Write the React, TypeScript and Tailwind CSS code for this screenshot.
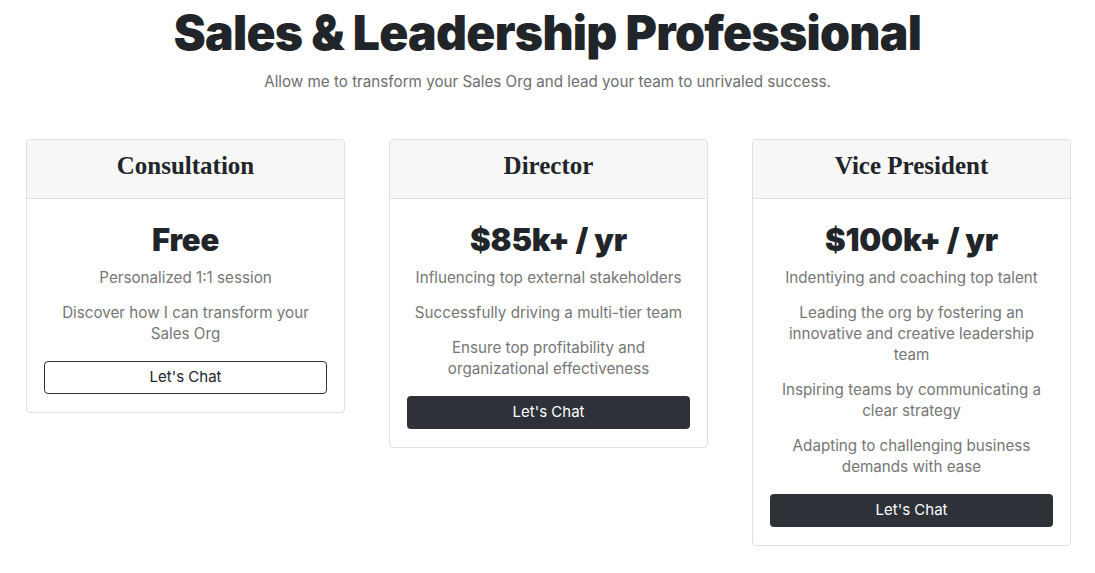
import React from 'react';

type Plan = {
  name: string;
  price: string;
  lines: React.ReactNode[];
  outline?: boolean;
};

const plans: Plan[] = [
  {
    name: 'Consultation',
    price: 'Free',
    lines: ['Personalized 1:1 session', 'Discover how I can transform your Sales Org'],
    outline: true,
  },
  {
    name: 'Director',
    price: '$85k+ / yr',
    lines: [
      'Influencing top external stakeholders',
      'Successfully driving a multi-tier team',
      'Ensure top profitability and organizational effectiveness',
    ],
  },
  {
    name: 'Vice President',
    price: '$100k+ / yr',
    lines: [
      'Indentiying and coaching top talent',
      <>
        Leading the org by fostering an innovative and creative leadership
        <br />
        team
      </>,
      'Inspiring teams by communicating a clear strategy',
      'Adapting to challenging business demands with ease',
    ],
  },
];

function PlanCard({ plan }: { plan: Plan }) {
  return (
    <div className="bg-white border border-[#dfdfdf] rounded-[4px] overflow-hidden">
      <div className="h-[59px] pb-[6px] bg-[#f7f7f7] border-b border-[#dfdfdf] flex items-center justify-center">
        <h4 className="font-['Liberation_Serif',serif] font-bold text-[25px] text-[#212529]">{plan.name}</h4>
      </div>
      <div className="px-[17px] pt-[23px] pb-[18px] text-center">
        <h1 className="font-['Inter',sans-serif] font-black text-[31px] leading-[36px] text-[#212529] tracking-[-0.2px] mb-[9px]">
          {plan.price}
        </h1>
        {plan.lines.map((line, i) => (
          <p key={i} className="text-[15.2px] leading-[21px] text-[#767676] mb-[14px]">
            {line}
          </p>
        ))}
        <button
          type="button"
          className={
            plan.outline
              ? 'mt-[3px] w-full h-[33px] rounded-[4px] border border-[#2e3138] bg-white text-[#212529] text-[15px]'
              : 'mt-[3px] w-full h-[33px] rounded-[4px] bg-[#2e3138] text-white text-[15px]'
          }
        >
          Let's Chat
        </button>
      </div>
    </div>
  );
}

export default function App() {
  return (
    <div className="min-h-screen bg-white font-['Inter',sans-serif] pb-8">
      <div className="text-center pt-[5px]">
        <h1 className="font-black text-[48px] leading-[56px] text-[#212529] tracking-[-0.7px]">
          Sales &amp; Leadership Professional
        </h1>
        <p className="mt-[10px] text-[15.2px] leading-[21px] text-[#6e6e6e]">
          Allow me to transform your Sales Org and lead your team to unrivaled success.
        </p>
      </div>
      <div className="grid grid-cols-3 gap-[44px] pl-[26px] pr-[24px] mt-[47px] items-start">
        {plans.map((plan) => (
          <PlanCard key={plan.name} plan={plan} />
        ))}
      </div>
    </div>
  );
}
